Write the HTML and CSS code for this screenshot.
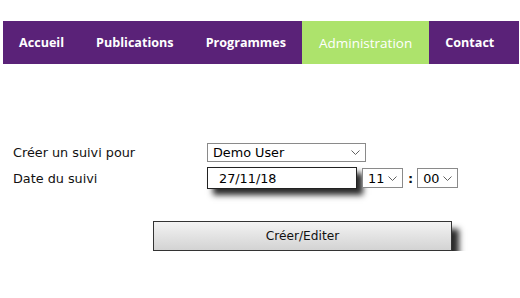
FILE: index.html
```html
<!DOCTYPE html>
<html lang="fr">

<head>
  <link rel="stylesheet" href="styles.css">
</head>

<body>
  <nav class="menu">
    <a href="#">Accueil</a>
    <a href="#">Publications</a>
    <a href="#">Programmes</a>
    <a href="#" class="active">Administration</a>
    <a href="#">Contact</a>
  </nav>

  <form class="suivi">
    <div class="row">
      <label for="user">Créer un suivi pour</label>
      <select id="user" class="user-select">
        <option>Demo User</option>
      </select>
    </div>
    <div class="row">
      <label for="date">Date du suivi</label>
      <div class="when">
        <input id="date" class="date" type="text" value="27/11/18">
        <select class="time">
          <option>11</option>
        </select>
        <span class="sep">:</span>
        <select class="time">
          <option>00</option>
        </select>
      </div>
    </div>
    <div class="actions">
      <button type="button">Créer/Editer</button>
    </div>
  </form>
</body>

</html>
```

FILE: styles.css
```css
:root {
  --purple: #5a2278;
  --green: #ade36c;
  --text: #111111;
  --font: 'DejaVu Sans', Verdana, sans-serif;
  --chevron: url("data:image/svg+xml;utf8,<svg xmlns='http://www.w3.org/2000/svg' width='9' height='5' viewBox='0 0 9 5'><path d='M0.5 0.5 L4.5 4.5 L8.5 0.5' fill='none' stroke='%23606060' stroke-width='1'/></svg>");
}

* {
  box-sizing: border-box;
}

body {
  margin: 0;
  padding: 21px 1px 0 3px;
  background: #ffffff;
  font-family: var(--font);
  color: var(--text);
}

.menu {
  display: flex;
  height: 43px;
  background: var(--purple);
}

.menu a {
  display: flex;
  align-items: center;
  padding: 0 16px;
  color: #ffffff;
  text-decoration: none;
  font-family: 'Open Sans', sans-serif;
  font-weight: 700;
  font-size: 12.6px;
}

.menu a.active {
  background: var(--green);
  font-weight: 400;
  font-size: 13.5px;
  padding: 0 17px;
  color: #ffffff;
}

.suivi {
  padding: 79px 0 0 10px;
  font-size: 12.8px;
}

.row {
  display: grid;
  grid-template-columns: 194px auto;
  align-items: center;
  margin-bottom: 5px;
}

select {
  appearance: none;
  -webkit-appearance: none;
  font-family: var(--font);
  font-size: 12.8px;
  color: #000000;
  border: 1px solid #8a8a8a;
  border-radius: 0;
  background: #ffffff var(--chevron) no-repeat right 5px center;
}

.user-select {
  width: 159px;
  height: 19px;
  padding: 0 0 0 5px;
}

.when {
  display: flex;
  align-items: center;
}

.date {
  width: 150px;
  height: 22px;
  padding: 0 11px;
  font-family: var(--font);
  font-size: 12.8px;
  border: 1px solid #222222;
  border-radius: 0;
  box-shadow: 6px 6px 6px #2a2a2a;
  color: #000000;
}

.time {
  width: 41px;
  height: 20px;
  margin-left: 5px;
  padding: 0 0 0 5px;
}

.sep {
  margin: 0 4px 0 5px;
  font-weight: 700;
}

.sep + .time {
  margin-left: 0;
}

.actions {
  padding: 27px 0 0 140px;
}

.actions button {
  width: 299px;
  height: 30px;
  font-family: var(--font);
  font-size: 12.2px;
  color: #111111;
  border: 1px solid #333333;
  background: linear-gradient(#f3f3f3, #d3d3d3);
  box-shadow: 7px 8px 6px #2a2a2a;
}
```
